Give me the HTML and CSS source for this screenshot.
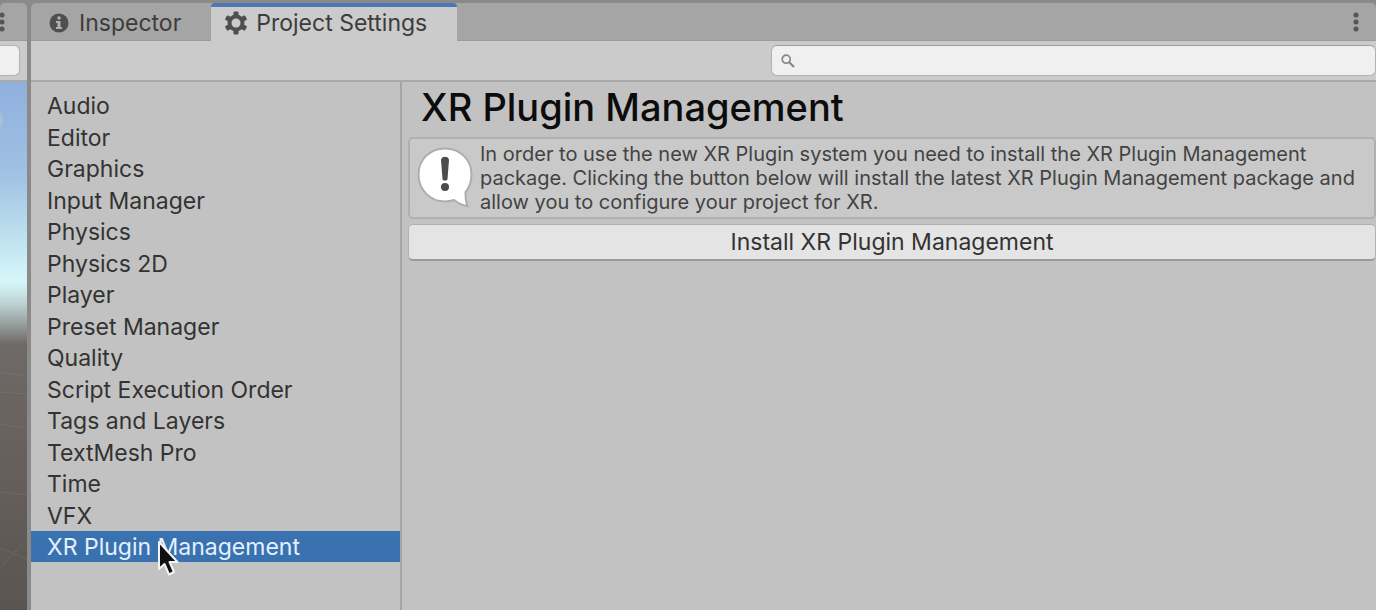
FILE: index.html
```html
<!DOCTYPE html>
<html lang="en">
<head>
    <meta charset="UTF-8">
    <meta name="viewport" content="width=device-width, initial-scale=1.0">
    <title>Project Settings</title>
    <link rel="stylesheet" href="styles.css">
</head>
<body>

<div class="editor">
    <aside class="scene">
        <div class="tab-bar">
            <button class="menu-button" type="button" aria-label="Scene menu">
                <svg width="6" height="20" viewBox="0 0 6 20"><g fill="#555"><circle cx="2" cy="3" r="2.5"/><circle cx="2" cy="10" r="2.5"/><circle cx="2" cy="17" r="2.5"/></g></svg>
            </button>
        </div>
        <div class="toolbar">
            <input class="scene-search" type="search" aria-label="Search scene">
        </div>
        <div class="viewport">
            <svg width="27" height="528" viewBox="0 0 27 528" preserveAspectRatio="none">
                <ellipse cx="-2" cy="38" rx="5" ry="8" fill="#b4c3d0" opacity="0.7"/>
                <g stroke="#8a827e" stroke-width="1" opacity="0.3" fill="none">
                    <path d="M0 290L27 294"/>
                    <path d="M0 310L27 312"/>
                    <path d="M0 342L27 346"/>
                    <path d="M0 410L27 413"/>
                    <path d="M0 466L27 477"/>
                    <path d="M2 484L27 457"/>
                </g>
            </svg>
        </div>
    </aside>

    <main class="window">
        <div class="tab-bar">
            <button class="tab" type="button">
                <svg width="20" height="20" viewBox="0 0 20 20">
                    <circle cx="10" cy="10" r="9.5" fill="#4f4f4f"/>
                    <circle cx="10" cy="5" r="1.8" fill="#b0b0b0"/>
                    <path d="M7 8H11.5V14H13V16H7V14H8.5V10H7Z" fill="#b0b0b0"/>
                </svg>
                Inspector
            </button>
            <button class="tab active" type="button">
                <svg width="24" height="24" viewBox="0 0 24 24">
                    <g fill="#4f4f4f">
                        <rect x="9.5" y="0.5" width="5" height="23" rx="1"/>
                        <rect x="9.5" y="0.5" width="5" height="23" rx="1" transform="rotate(60 12 12)"/>
                        <rect x="9.5" y="0.5" width="5" height="23" rx="1" transform="rotate(120 12 12)"/>
                        <circle cx="12" cy="12" r="8.5"/>
                    </g>
                    <circle cx="12" cy="12" r="4.5" fill="#cbcbcb"/>
                </svg>
                Project Settings
            </button>
            <button class="menu-button window-menu" type="button" aria-label="Window menu">
                <svg width="6" height="20" viewBox="0 0 6 20"><g fill="#555"><circle cx="3" cy="3" r="2.5"/><circle cx="3" cy="10" r="2.5"/><circle cx="3" cy="17" r="2.5"/></g></svg>
            </button>
        </div>

        <div class="toolbar">
            <label class="search">
                <svg width="14" height="14" viewBox="0 0 14 14" fill="none" stroke="#868686">
                    <circle cx="5.2" cy="5.2" r="4" stroke-width="1.7"/>
                    <path d="M8.3 8.3L13 13" stroke-width="2.2"/>
                </svg>
                <input type="search" aria-label="Search settings">
            </label>
        </div>

        <div class="content">
            <nav class="categories">
                <ul>
                    <li><a href="#audio">Audio</a></li>
                    <li><a href="#editor">Editor</a></li>
                    <li><a href="#graphics">Graphics</a></li>
                    <li><a href="#input">Input Manager</a></li>
                    <li><a href="#physics">Physics</a></li>
                    <li><a href="#physics2d">Physics 2D</a></li>
                    <li><a href="#player">Player</a></li>
                    <li><a href="#preset">Preset Manager</a></li>
                    <li><a href="#quality">Quality</a></li>
                    <li><a href="#script">Script Execution Order</a></li>
                    <li><a href="#tags">Tags and Layers</a></li>
                    <li><a href="#textmesh">TextMesh Pro</a></li>
                    <li><a href="#time">Time</a></li>
                    <li><a href="#vfx">VFX</a></li>
                    <li><a class="selected" href="#xr">XR Plugin Management</a>
                        <svg class="cursor" width="24" height="38" viewBox="0 0 24 38">
                            <path d="M2 2V29L7.5 24L12 34.500L17 32L12.500 22H20.500Z" fill="#101010" stroke="#f4f4f4" stroke-width="2" stroke-linejoin="round"/>
                        </svg>
                    </li>
                </ul>
            </nav>

            <section class="settings" id="xr">
                <h1>XR Plugin Management</h1>
                <div class="help-box">
                    <svg width="56" height="62" viewBox="0 0 56 62">
                        <path d="M28 1.5C13 1.5 1.5 12.5 1.5 27.5C1.5 42.5 13 54.5 28 54.5C31 54.5 34 54 37 53C41 56 46 58.5 50.5 59C48.5 55 48.500 50 48.500 45C52.500 40 54.500 34 54.500 27.500C54.500 12.500 43 1.500 28 1.500Z" fill="#fff" stroke="#adadad" stroke-width="2"/>
                        <path d="M24 13C24 8.5 32 8.5 32 13L30.5 32C30.5 34 25.5 34 25.5 32Z" fill="#4c4c4c"/>
                        <circle cx="28" cy="40" r="4" fill="#4c4c4c"/>
                    </svg>
                    <p>In order to use the new XR Plugin system you need to install the XR Plugin Management package. Clicking the button below will install the latest XR Plugin Management package and allow you to configure your project for XR.</p>
                </div>
                <button class="install" type="button">Install XR Plugin Management</button>
            </section>
        </div>
    </main>
</div>

</body>
</html>
```

FILE: styles.css
```css
* {
    box-sizing: border-box;
}
body {
    margin: 0;
    font-family: Inter, "Liberation Sans", sans-serif;
    font-size: 23px;
    color: #333;
    background-color: #8a8a8a;
}
button,
input {
    font: inherit;
    color: inherit;
}
svg {
    display: block;
    flex: none;
}
.editor {
    display: flex;
    gap: 4px;
    min-height: 100vh;
    padding-top: 3px;
}
.scene {
    display: flex;
    flex-direction: column;
    width: 27px;
    overflow: hidden;
}
.window {
    display: flex;
    flex-direction: column;
    flex: 1;
    min-width: 0;
}
.tab-bar {
    display: flex;
    height: 38px;
    background-color: #a5a5a5;
    border-bottom: 1px solid #9b9b9b;
    border-radius: 5px 5px 0 0;
}
.tab {
    display: flex;
    align-items: center;
    gap: 10px;
    height: 38px;
    padding: 2px 30px 0 18px;
    border: none;
    background: none;
    color: #3c3c3c;
}
.tab.active {
    gap: 8px;
    padding: 0 30px 2px 13px;
    background-color: #cbcbcb;
    border-top: 4px solid #4a78b5;
    border-radius: 4px 4px 0 0;
}
.menu-button {
    padding: 0;
    border: none;
    background: none;
}
.window-menu {
    margin-left: auto;
    padding-right: 17px;
}
.toolbar {
    display: flex;
    height: 41px;
    padding: 4px 0;
    background-color: #cbcbcb;
    border-bottom: 2px solid #a9a9a9;
}
.scene-search {
    width: 20px;
    padding: 0;
    background-color: #f0f0f0;
    border: 1px solid #b2b2b2;
    border-left: none;
    border-radius: 0 6px 6px 0;
}
.search {
    display: flex;
    align-items: center;
    gap: 8px;
    width: 45%;
    margin-left: auto;
    padding: 0 9px;
    background-color: #f0f0f0;
    border: 1px solid #b2b2b2;
    border-top-color: #9f9f9f;
    border-radius: 6px;
}
.search input {
    flex: 1;
    min-width: 0;
    padding: 0;
    border: none;
    outline: none;
    background: none;
}
.viewport {
    flex: 1;
    background: linear-gradient(#8fb0dd 0, #9fc1e3 90px, #b9dcec 145px, #d6f7f9 200px, #c0d5d7 220px, #96a09f 242px, #6e6a68 262px, #69615d 350px, #5a5551 100%);
}
.content {
    display: flex;
    flex: 1;
    background-color: #c2c2c2;
}
.categories {
    width: 371px;
    padding-top: 8px;
    border-right: 2px solid #a6a6a6;
}
.categories ul {
    margin: 0;
    padding: 0;
    list-style: none;
}
.categories li {
    position: relative;
    line-height: 29px;
}
.categories li:nth-child(even) {
    line-height: 30px;
}
.categories a {
    display: block;
    padding: 2px 0 0 16px;
    color: inherit;
    text-decoration: none;
}
.categories .selected {
    color: #e4f0ff;
    background-color: #3a72b0;
}
.cursor {
    position: absolute;
    top: 9px;
    left: 126px;
}
.settings {
    flex: 1;
    min-width: 0;
    padding-left: 6px;
}
h1 {
    margin: 0;
    padding: 4px 0 8px 13px;
    font-size: 38px;
    font-weight: 500;
    line-height: 43px;
    color: #0c0c0c;
}
.help-box {
    display: flex;
    align-items: center;
    gap: 7px;
    padding: 3px 7px;
    font-size: 20px;
    line-height: 24px;
    color: #434343;
    background-color: #c9c9c9;
    border: 2px solid #b0b0b0;
    border-radius: 5px;
}
.help-box p {
    margin: 0;
}
.install {
    display: block;
    width: 100%;
    height: 37px;
    margin-top: 5px;
    padding: 0;
    background-color: #e4e4e4;
    border: 1px solid #b2b2b2;
    border-bottom: 2px solid #999;
    border-radius: 5px;
}
```
